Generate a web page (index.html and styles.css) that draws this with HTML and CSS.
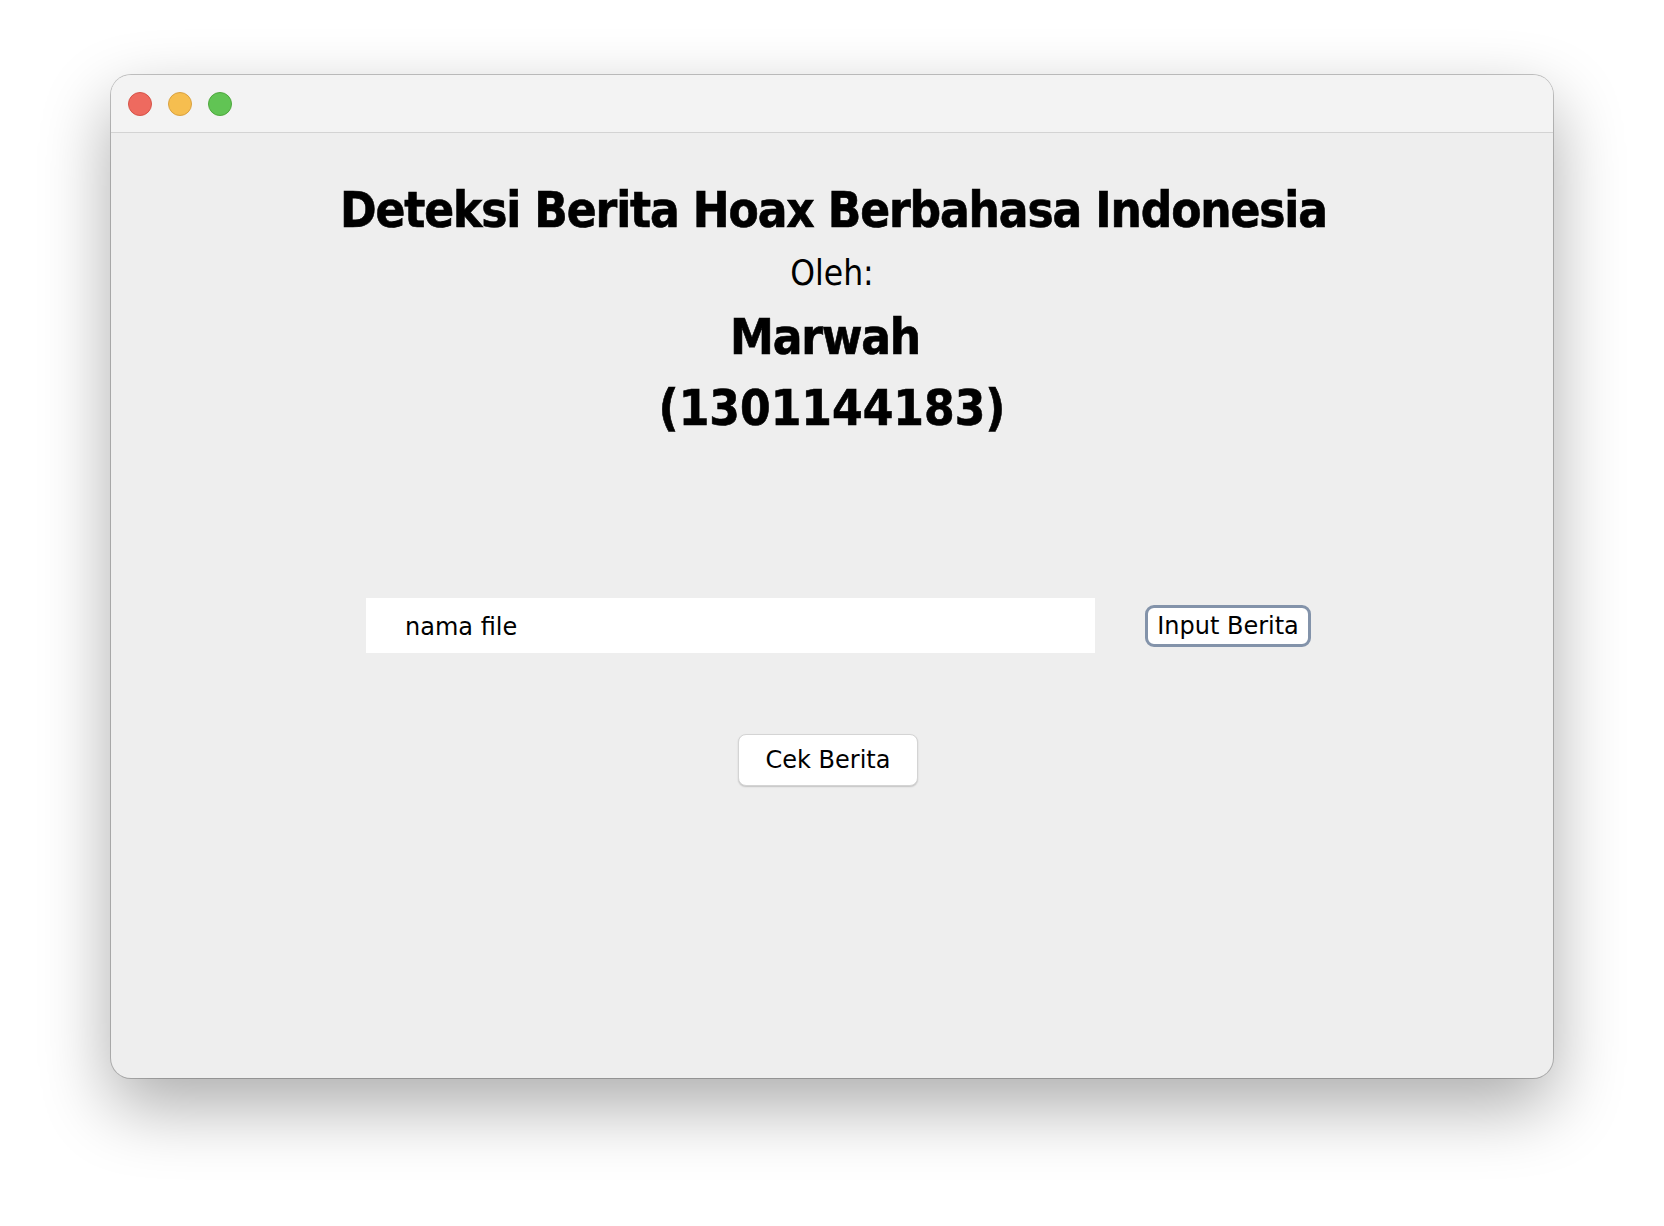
FILE: index.html
```html
<!DOCTYPE html>
<html lang="id">
<head>
<meta charset="utf-8">
<title>Deteksi Berita Hoax</title>
<link rel="stylesheet" href="styles.css">
</head>
<body>
<div class="desk">
  <div class="window">
    <div class="titlebar">
      <span class="light red"></span>
      <span class="light yellow"></span>
      <span class="light green"></span>
    </div>
    <div class="content">
      <div class="heading">
        <h1 class="title">Deteksi Berita Hoax Berbahasa Indonesia</h1>
        <div class="by">Oleh:</div>
        <div class="name">Marwah</div>
        <div class="nim">(1301144183)</div>
      </div>
      <div class="file-row">
        <div class="field">nama file</div>
        <button class="btn-input">Input Berita</button>
      </div>
      <button class="btn-cek">Cek Berita</button>
    </div>
  </div>
</div>
</body>
</html>
```
FILE: styles.css
```css
html, body {
  margin: 0;
  padding: 0;
  background: #ffffff;
}
.desk {
  padding: 75px 111px;
  min-height: 1226px;
  box-sizing: border-box;
  display: flex;
  align-items: flex-start;
}
.window {
  width: 1442px;
  height: 1003px;
  border-radius: 20px;
  background: #eeeeee;
  box-shadow: 0 0 0 1px rgba(0, 0, 0, 0.22), 0 28px 70px rgba(0, 0, 0, 0.33);
  overflow: hidden;
  display: flex;
  flex-direction: column;
  flex: none;
}
.titlebar {
  height: 57px;
  background: #f3f3f3;
  border-bottom: 1px solid #d3d3d3;
  display: flex;
  align-items: center;
  gap: 16px;
  padding-left: 17px;
  flex: none;
}
.light {
  width: 24px;
  height: 24px;
  border-radius: 50%;
  box-sizing: border-box;
}
.red { background: #ee6a5f; border: 1px solid #d65348; }
.yellow { background: #f6be4f; border: 1px solid #d9a140; }
.green { background: #61c454; border: 1px solid #4ea73d; }
.content {
  flex: 1;
  display: flex;
  flex-direction: column;
  align-items: center;
  padding-top: 49px;
  font-family: "DejaVu Sans Condensed", "DejaVu Sans", sans-serif;
  color: #000;
}
.heading {
  display: flex;
  flex-direction: column;
  align-items: center;
}
.title {
  margin: 0 0 11px;
  font-size: 49px;
  line-height: 58px;
  font-weight: bold;
  letter-spacing: -1.15px;
  -webkit-text-stroke: 0.6px #000;
  padding-left: 3px;
}
.by {
  font-size: 35px;
  line-height: 44px;
  margin-bottom: 14px;
}
.name, .nim {
  font-size: 49px;
  line-height: 58px;
  font-weight: bold;
  -webkit-text-stroke: 0.6px #000;
}
.name {
  margin-bottom: 13px;
  margin-right: 14px;
  letter-spacing: -1.2px;
}
.file-row {
  margin-top: 160px;
  display: flex;
  align-items: center;
  gap: 50px;
  padding-left: 13px;
}
.field {
  width: 729px;
  height: 55px;
  background: #ffffff;
  padding-left: 39px;
  padding-top: 3px;
  box-sizing: border-box;
  display: flex;
  align-items: center;
  font-family: "DejaVu Sans", sans-serif;
  font-size: 24px;
}
.btn-input, .btn-cek {
  font-family: "DejaVu Sans", sans-serif;
  font-size: 24px;
  color: #000;
  background: #ffffff;
  margin: 0;
  cursor: default;
}
.btn-input {
  height: 42px;
  width: 166px;
  padding: 0;
  border: 3px solid #8393aa;
  border-radius: 9px;
  line-height: 36px;
  text-align: center;
}
.btn-cek {
  margin-top: 81px;
  margin-right: 8px;
  width: 180px;
  height: 52px;
  padding: 0;
  border: 1px solid #d4d4d4;
  border-radius: 8px;
  box-shadow: 0 1px 1.5px rgba(0, 0, 0, 0.18);
  text-align: center;
  line-height: 48px;
}
```
